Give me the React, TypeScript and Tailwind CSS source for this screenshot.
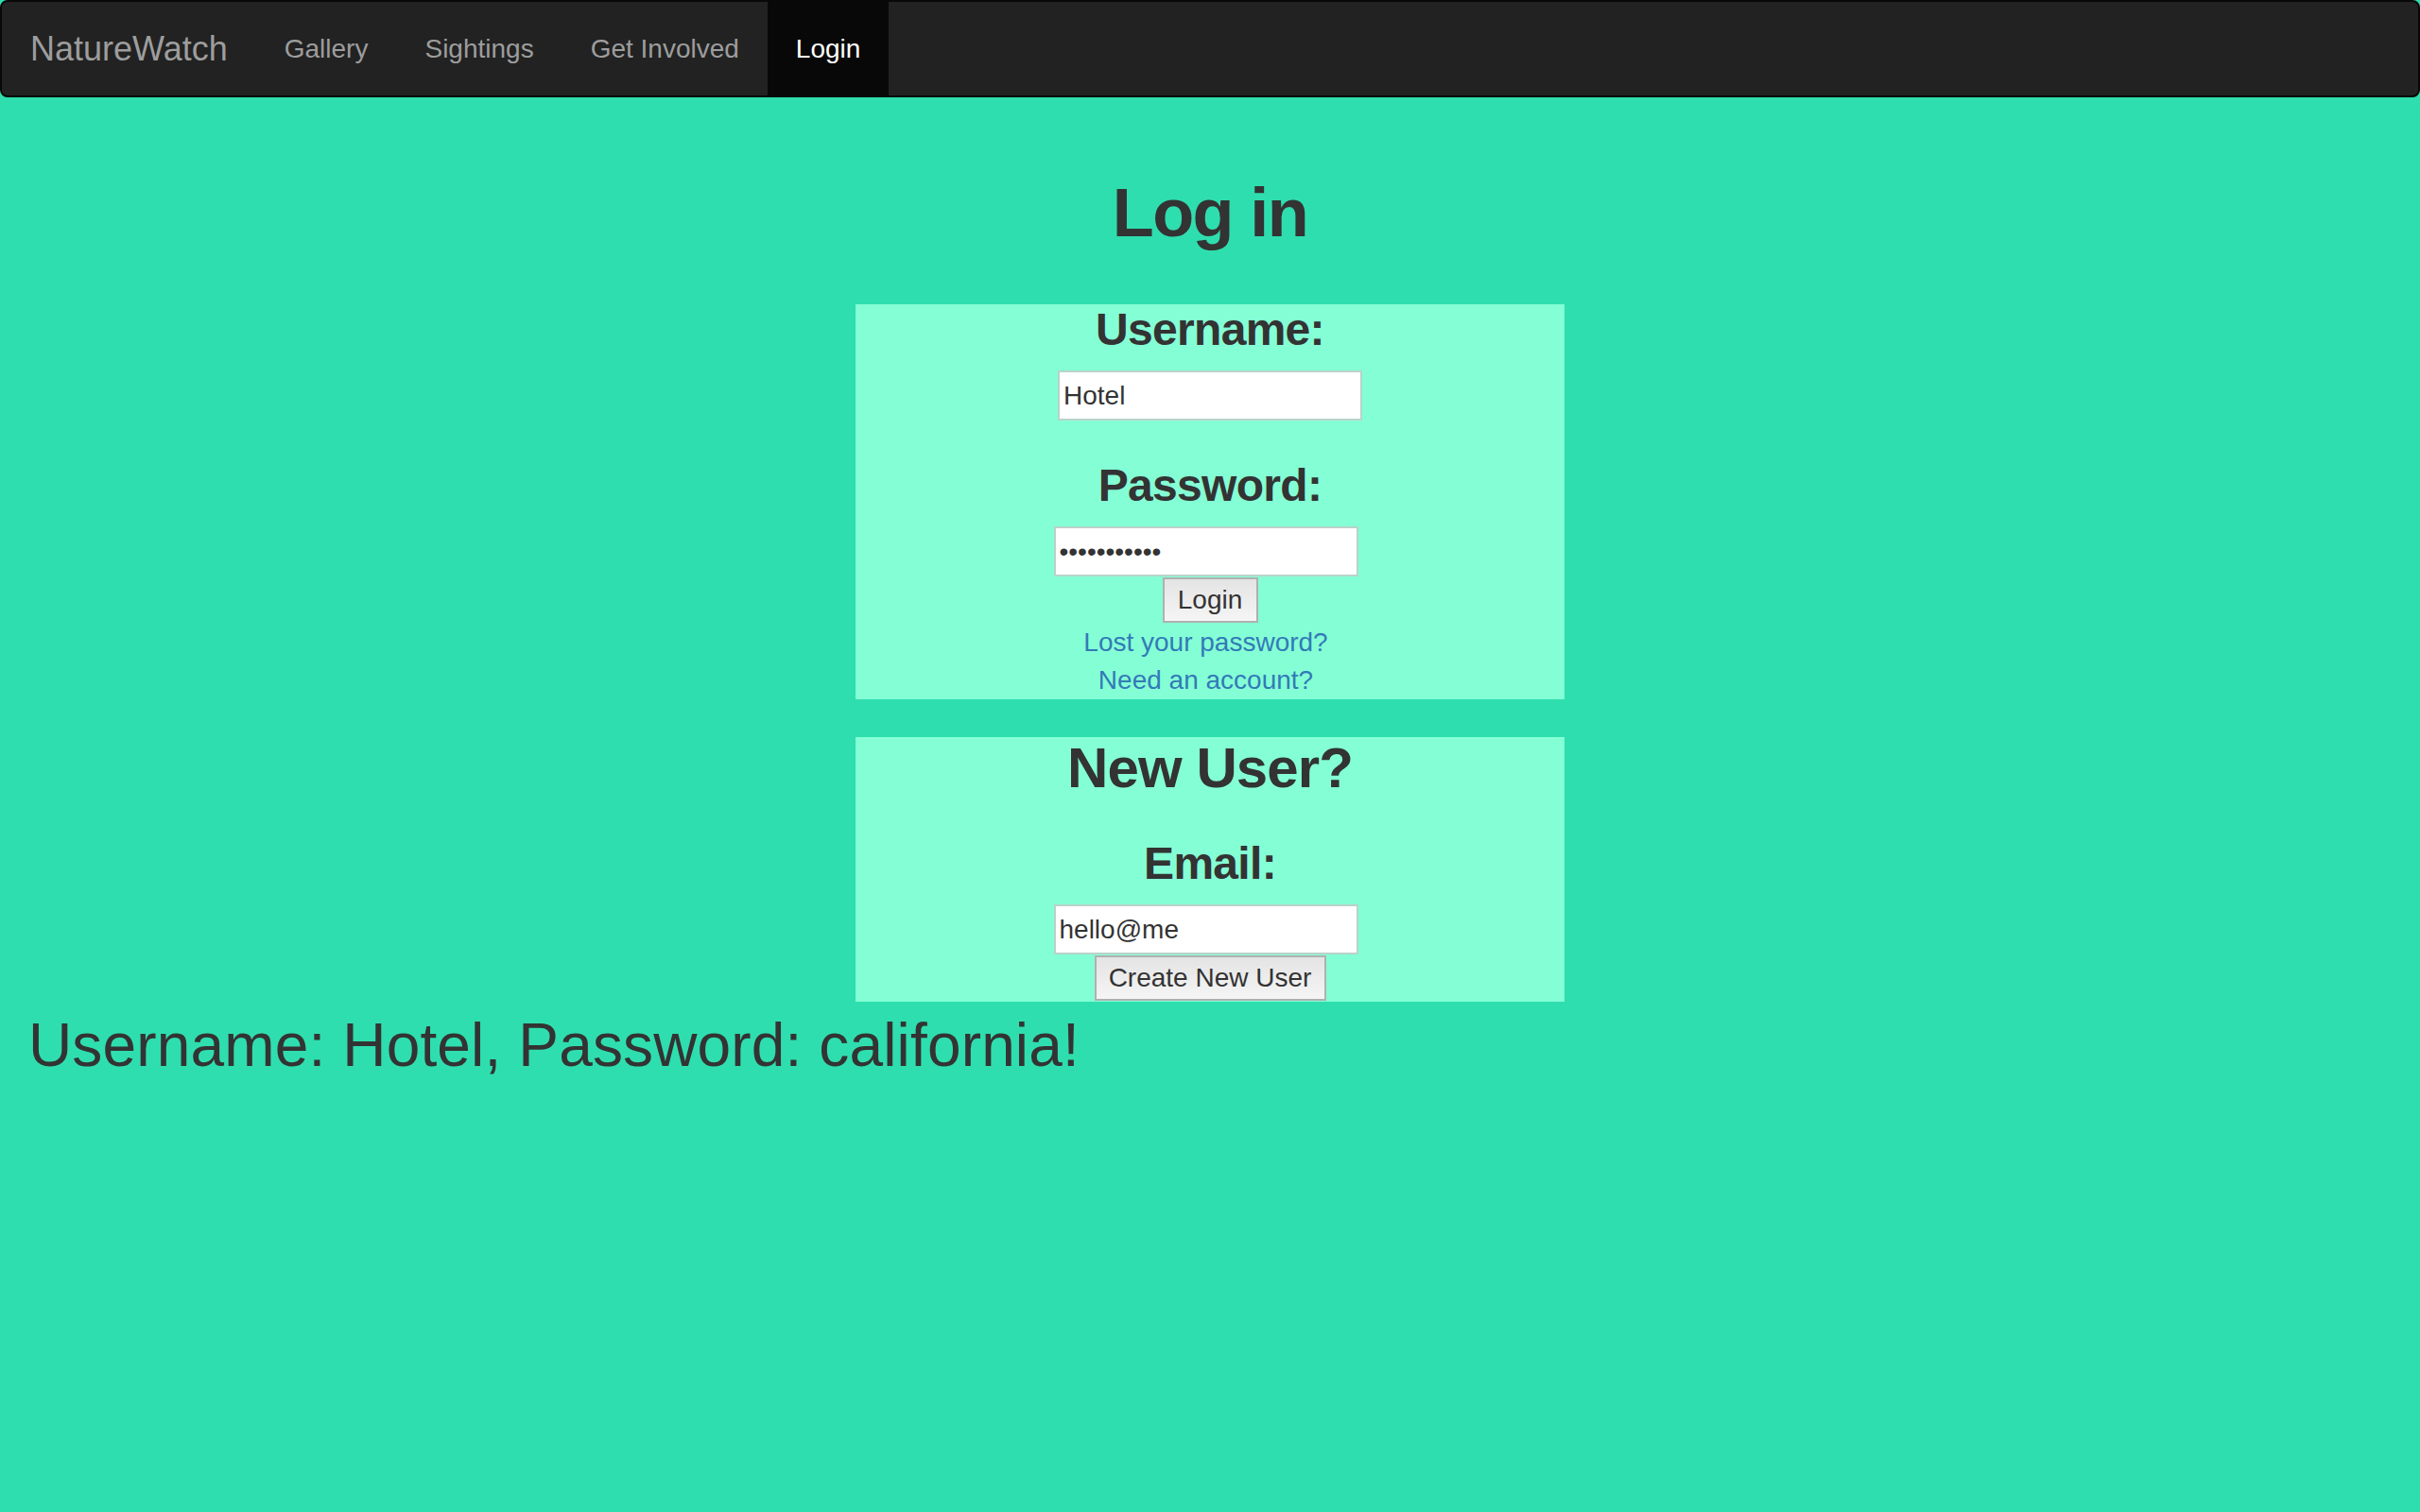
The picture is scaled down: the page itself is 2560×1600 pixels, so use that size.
import React from 'react';

const navLinks = ['Gallery', 'Sightings', 'Get Involved'];

export default function App() {
  return (
    <div className="min-h-screen bg-[#2fdeae] font-['Liberation_Sans',Arial,sans-serif] text-[#333]">
      {/* Navbar */}
      <nav className="flex h-[103px] rounded-[8px] border-2 border-[#080808] bg-[#222]">
        <a className="flex items-center px-[30px] text-[36px] leading-[40px] text-[#9d9d9d]">NatureWatch</a>
        {navLinks.map((link) => (
          <a key={link} className="flex items-center px-[30px] text-[28px] leading-[40px] text-[#9d9d9d]">
            {link}
          </a>
        ))}
        <a className="flex items-center bg-[#080808] px-[30px] text-[28px] leading-[40px] text-white">Login</a>
      </nav>

      <h1 className="mt-[83px] mb-[57px] text-center text-[72px] leading-[79px] font-bold tracking-[-1.6px]">Log in</h1>

      {/* Login box */}
      <div className="mx-auto flex w-[750px] flex-col items-center bg-[#84ffd5]">
        <h3 className="text-[48px] leading-[53px] font-bold tracking-[-0.7px]">Username:</h3>
        <input
          type="text"
          defaultValue="Hotel"
          className="mt-[17px] h-[53px] w-[322px] border-2 border-[#b9d3c8] bg-white pl-[4px] text-[28px] text-[#333] outline-none"
        />
        <h3 className="mt-[42px] text-[48px] leading-[53px] font-bold tracking-[-0.7px]">Password:</h3>
        <input
          type="password"
          defaultValue="california!"
          className="mt-[17px] mr-[9px] h-[53px] w-[322px] border-2 border-[#b9d3c8] bg-white pl-[4px] text-[28px] text-[#333] outline-none"
        />
        <button className="mt-[1px] h-[48px] w-[101px] border-2 border-[#b0b0b0] bg-gradient-to-b from-[#e4e4e4] to-[#f5f5f5] text-[28px] leading-[40px] text-[#333]">
          Login
        </button>
        <a className="mt-[1px] mr-[9px] text-[28px] leading-[40px] text-[#337ab7]">Lost your password?</a>
        <a className="mr-[9px] text-[28px] leading-[40px] text-[#337ab7]">Need an account?</a>
      </div>

      {/* New user box */}
      <div className="mx-auto mt-[40px] flex w-[750px] flex-col items-center bg-[#84ffd5] pb-[1px]">
        <h2 className="text-[60px] leading-[66px] font-bold tracking-[-0.9px]">New User?</h2>
        <h3 className="mt-[41px] text-[48px] leading-[53px] font-bold tracking-[-0.7px]">Email:</h3>
        <input
          type="text"
          defaultValue="hello@me"
          className="mt-[17px] mr-[9px] h-[53px] w-[322px] border-2 border-[#b9d3c8] bg-white pl-[4px] text-[28px] text-[#333] outline-none"
        />
        <button className="mt-[1px] h-[48px] w-[245px] border-2 border-[#b0b0b0] bg-gradient-to-b from-[#e4e4e4] to-[#f5f5f5] text-[28px] leading-[40px] text-[#333]">
          Create New User
        </button>
      </div>

      <p className="mt-[11px] pl-[30px] text-[64px] leading-[70px] tracking-[0.15px]">Username: Hotel, Password: california!</p>
    </div>
  );
}
